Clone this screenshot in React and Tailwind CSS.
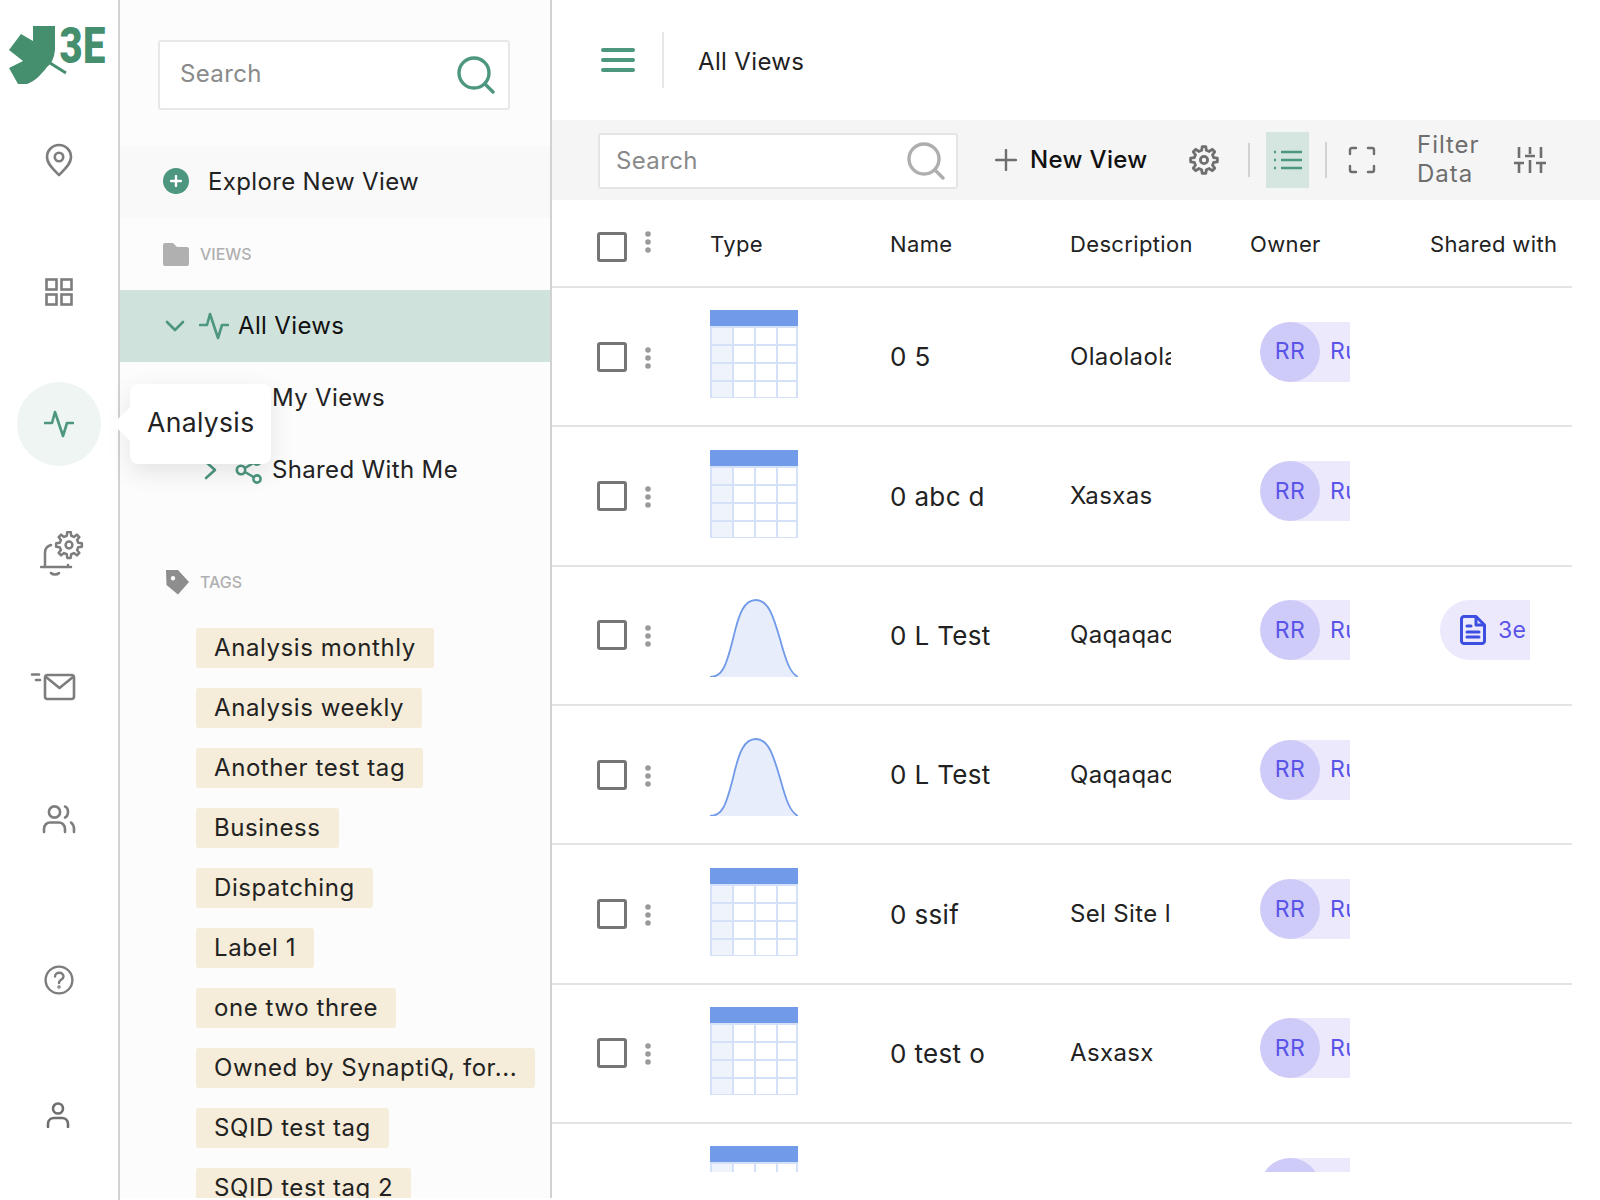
import React from "react";

function gearPath(cx, cy, ro, ri, n) {
  const step = (Math.PI * 2) / n;
  const pts = [];
  for (let i = 0; i < n; i++) {
    const a = i * step - Math.PI / 2;
    const w1 = step * 0.3;
    const w2 = step * 0.17;
    pts.push([cx + ri * Math.cos(a - w1), cy + ri * Math.sin(a - w1)]);
    pts.push([cx + ro * Math.cos(a - w2), cy + ro * Math.sin(a - w2)]);
    pts.push([cx + ro * Math.cos(a + w2), cy + ro * Math.sin(a + w2)]);
    pts.push([cx + ri * Math.cos(a + w1), cy + ri * Math.sin(a + w1)]);
  }
  return "M" + pts.map((p) => p[0].toFixed(2) + " " + p[1].toFixed(2)).join(" L") + " Z";
}

const Pin = () => (
  <svg width="30" height="34" viewBox="0 0 30 34" fill="none" stroke="#7d7d7d" strokeWidth="2.6">
    <path d="M15 32 C10 27 3 21 3 14 A12 12 0 0 1 27 14 C27 21 20 27 15 32 Z" strokeLinejoin="round" />
    <circle cx="15" cy="14" r="4.2" />
  </svg>
);
const GridIcon = () => (
  <svg width="28" height="28" viewBox="0 0 28 28" fill="none" stroke="#7d7d7d" strokeWidth="2.6">
    <rect x="1.5" y="1.5" width="10" height="10" />
    <rect x="16.5" y="1.5" width="10" height="10" />
    <rect x="1.5" y="16.5" width="10" height="10" />
    <rect x="16.5" y="16.5" width="10" height="10" />
  </svg>
);
const Activity = ({ w = 30, h = 28, sw = 2.6 }) => (
  <svg width={w} height={h} viewBox="0 0 30 28" fill="none" stroke="#4d9680" strokeWidth={sw} strokeLinecap="round" strokeLinejoin="round">
    <path d="M1 13 H8 L11 2 L19 26 L23 13 H29" />
  </svg>
);
const BellGear = () => (
  <svg width="44" height="46" viewBox="0 0 44 46" fill="none" stroke="#7d7d7d" strokeWidth="2.5" strokeLinecap="round" strokeLinejoin="round">
    <path d="M1 36 H31 M5 36 V22 C5 18 7 15 11 14 M28 36 L28 34 M11 42 C13 44 17 44 19 42" />
    <path d={gearPath(29, 14, 13, 9.5, 8)} />
    <circle cx="29" cy="14" r="3.4" />
  </svg>
);
const Mail = () => (
  <svg width="46" height="28" viewBox="0 0 46 28" fill="none" stroke="#7d7d7d" strokeWidth="2.6" strokeLinecap="round" strokeLinejoin="round">
    <rect x="15" y="2" width="29" height="24" rx="2.5" />
    <path d="M16 4 L29.5 15 L43 4" />
    <path d="M2 1.5 H9 M6 7 H10" />
  </svg>
);
const Users = () => (
  <svg width="34" height="30" viewBox="0 0 34 30" fill="none" stroke="#7d7d7d" strokeWidth="2.6" strokeLinecap="round">
    <circle cx="12.5" cy="8" r="5.6" />
    <path d="M23 2.5 C27 4 27 12 23 13.5" />
    <path d="M2 28 V25 C2 21 5 18.5 8 18.5 H17 C20 18.5 23 21 23 25 V28" />
    <path d="M29 18.5 C31 20 32 22 32 25 V28" />
  </svg>
);
const Help = () => (
  <svg width="30" height="30" viewBox="0 0 30 30" fill="none" stroke="#7d7d7d" strokeWidth="2.4" strokeLinecap="round">
    <circle cx="15" cy="15" r="13.4" />
    <path d="M11 11.5 C11 6.5 19.5 6.5 19.5 11.5 C19.5 14.5 15 14.5 15 18" />
    <circle cx="15" cy="22" r="0.6" fill="#7d7d7d" />
  </svg>
);
const User = () => (
  <svg width="24" height="26" viewBox="0 0 24 26" fill="none" stroke="#6e6e6e" strokeWidth="2.6" strokeLinecap="round">
    <circle cx="12" cy="6.5" r="5" />
    <path d="M2 25 V22 C2 18 5 16 8 16 H16 C19 16 22 18 22 22 V25" />
  </svg>
);
const Search = ({ c = "#4d9680" }) => (
  <svg width="38" height="38" viewBox="0 0 38 38" fill="none" stroke={c} strokeWidth="3.4" strokeLinecap="round">
    <circle cx="17" cy="17" r="15" />
    <path d="M28 28 L36 36" />
  </svg>
);
const Chevron = ({ down }) => (
  <svg width="20" height="20" viewBox="0 0 20 20" fill="none" stroke="#4d9680" strokeWidth="2.6" strokeLinecap="round" strokeLinejoin="round">
    {down ? <path d="M2 6 L10 14 L18 6" /> : <path d="M6 2 L15 10 L6 18" />}
  </svg>
);
const Share = () => (
  <svg width="28" height="28" viewBox="0 0 28 28" fill="none" stroke="#4d9680" strokeWidth="2.6">
    <circle cx="6" cy="14" r="4.2" />
    <circle cx="22" cy="5" r="3.6" />
    <circle cx="22" cy="23" r="3.6" />
    <path d="M10 12 L18.5 7 M10 16 L18.5 21" />
  </svg>
);
const GreenUser = () => (
  <svg width="28" height="28" viewBox="0 0 28 28" fill="none" stroke="#4d9680" strokeWidth="2.6">
    <circle cx="14" cy="7" r="5" />
    <path d="M3 27 C3 19 8 17 14 17 C20 17 25 19 25 27" />
  </svg>
);
const Logo = () => (
  <svg width="118" height="93" viewBox="0 0 118 93">
    <path d="M33 26 H55 V50 C54 58 52 63 47 67 C41 75 35 81 27 84 H18 L9 68 L23 61 L9 50 L21 34 L33 41 Z" fill="#458f6f" />
    <path d="M50 63 L66 73" stroke="#458f6f" strokeWidth="3" />
    <text x="59.5" y="62.5" textLength="46" lengthAdjust="spacingAndGlyphs" fontFamily="Roboto" fontWeight="900" fontSize="50" fill="#458f6f">3E</text>
  </svg>
);
const TableThumb = () => (
  <svg width="88" height="88" viewBox="0 0 88 88" className="block shrink-0">
    <rect width="88" height="88" fill="#d5e1f9" />
    <rect width="88" height="16" fill="#719ae9" />
    {[17, 35, 53, 71].map((y) => (
      <g key={y}>
        <rect x="2" y={y + 1} width="20" height={y === 71 ? 15 : 16} fill="#eef3fc" />
        <rect x="24" y={y + 1} width="20" height={y === 71 ? 15 : 16} fill="#fff" />
        <rect x="46" y={y + 1} width="20" height={y === 71 ? 15 : 16} fill="#fff" />
        <rect x="68" y={y + 1} width="18" height={y === 71 ? 15 : 16} fill="#fff" />
      </g>
    ))}
  </svg>
);
const curve = "M0 88 C12 88 16 78 23 50 C29 24 34 11 46 11 C58 11 63 26 70 50 C76 72 80 84 88 88";
const BellThumb = () => (
  <svg width="88" height="88" viewBox="0 0 88 88" className="block shrink-0">
    <path d={curve + " Z"} fill="#e7edfb" />
    <path d={curve} fill="none" stroke="#719ae9" strokeWidth="1.8" />
  </svg>
);
const Dots = () => (
  <svg width="8" height="22" viewBox="0 0 8 22" fill="#9a9a9a" className="block">
    <circle cx="4" cy="3" r="2.8" />
    <circle cx="4" cy="11" r="2.8" />
    <circle cx="4" cy="19" r="2.8" />
  </svg>
);
const Check = () => <div className="w-[30px] h-[30px] border-[3px] border-[#757575] rounded-[3px] shrink-0 bg-white" />;

const Doc = () => (
  <svg width="26" height="30" viewBox="0 0 26 30" fill="none" stroke="#3d4fe0" strokeWidth="3" strokeLinecap="round" strokeLinejoin="round">
    <path d="M4 1.5 H16 L24.5 10 V26 A2.5 2.5 0 0 1 22 28.5 H4 A2.5 2.5 0 0 1 1.5 26 V4 A2.5 2.5 0 0 1 4 1.5 Z" />
    <path d="M16 2 V10 H24" />
    <path d="M7 11 H11 M7 17 H19 M7 22 H19" />
  </svg>
);

const OwnerChip = () => (
  <div className="flex items-center w-[90px] h-[60px] bg-[#ece9fd] rounded-l-[30px] overflow-hidden mb-[10px] ml-[10px] shrink-0">
    <div className="w-[60px] h-[60px] rounded-full bg-[#cfcbf9] text-[#5b54e8] text-[23px] flex items-center justify-center shrink-0">RR</div>
    <span className="text-[#5b54e8] text-[23px] ml-[10px] whitespace-nowrap">Rudi</span>
  </div>
);

const rows = [
  ["t", "0 5", "Olaolaola"],
  ["t", "0 abc d", "Xasxas"],
  ["b", "0 L Test", "Qaqaqaca", true],
  ["b", "0 L Test", "Qaqaqaca"],
  ["t", "0 ssif", "Sel Site l"],
  ["t", "0 test o", "Asxasx"],
  ["t", "", ""],
];
const tags = ["Analysis monthly", "Analysis weekly", "Another test tag", "Business", "Dispatching", "Label 1", "one two three", "Owned by SynaptiQ, for...", "SQID test tag", "SQID test tag 2"];

const RailItem = ({ children }) => <div className="h-[132.4px] w-full flex items-center justify-center shrink-0">{children}</div>;

export default function App() {
  return (
    <div className="relative flex w-[1600px] h-[1200px] overflow-hidden bg-white font-['Inter',sans-serif] text-[#222] tracking-[0.022em]">
      {/* rail */}
      <div className="w-[120px] h-full border-r-2 border-[#d2d2d2] flex flex-col shrink-0 bg-white">
        <div className="h-[93px] shrink-0"><Logo /></div>
        <RailItem><div className="mt-[2px]"><Pin /></div></RailItem>
        <RailItem><GridIcon /></RailItem>
        <RailItem>
          <div className="w-[84px] h-[84px] rounded-full bg-[#eef5f2] flex items-center justify-center"><Activity /></div>
        </RailItem>
        <RailItem><div className="ml-[6px] mb-[4px]"><BellGear /></div></RailItem>
        <RailItem><div className="-ml-[12px] mb-[4px]"><Mail /></div></RailItem>
        <RailItem><div className="mb-[4px]"><Users /></div></RailItem>
        <div className="mt-[26px]"><RailItem><Help /></RailItem></div>
        <RailItem><div className="mt-[6px] -ml-[2px]"><User /></div></RailItem>
      </div>

      {/* panel */}
      <div className="w-[432px] h-[1198px] overflow-hidden border-r-2 border-[#d2d2d2] bg-[#fcfcfc] shrink-0 pt-[40px] flex flex-col">
        <div className="mx-[38px] h-[70px] w-[352px] shrink-0 bg-white border-2 border-[#e8e8e8] rounded-[3px] flex items-center justify-between pl-[20px] pr-[13px]">
          <span className="text-[24px] text-[#8a8a8a] -mt-[2px]">Search</span>
          <Search />
        </div>
        <div className="mt-[36px] h-[72px] shrink-0 bg-[#f9f9f9] flex items-center pl-[43px]">
          <div className="w-[26px] h-[26px] rounded-full bg-[#4d9680] text-white flex items-center justify-center -mt-[2px]">
            <svg width="12" height="12" viewBox="0 0 12 12" stroke="#fff" strokeWidth="2.4" strokeLinecap="round"><path d="M6 1 V11 M1 6 H11" /></svg>
          </div>
          <span className="ml-[19px] text-[24px]">Explore New View</span>
        </div>
        <div className="h-[72px] shrink-0 flex items-center pl-[43px]">
          <svg width="26" height="23" viewBox="0 0 26 23" fill="#b0b0b0"><path d="M2 0 H10 L14 4 H24 A2 2 0 0 1 26 6 V21 A2 2 0 0 1 24 23 H2 A2 2 0 0 1 0 21 V2 A2 2 0 0 1 2 0 Z" /></svg>
          <span className="ml-[11px] text-[16px] font-medium text-[#b0b0b0] tracking-normal">VIEWS</span>
        </div>
        <div className="h-[72px] shrink-0 bg-[#cfe2dc] flex items-center pl-[45px]">
          <Chevron down />
          <div className="ml-[14px]"><Activity /></div>
          <span className="ml-[9px] text-[24px] text-[#111]">All Views</span>
        </div>
        <div className="h-[72px] shrink-0 flex items-center pl-[115px]">
          <GreenUser />
          <span className="ml-[9px] text-[24px]">My Views</span>
        </div>
        <div className="h-[72px] shrink-0 flex items-center pl-[80px]">
          <Chevron />
          <div className="ml-[15px]"><Share /></div>
          <span className="ml-[9px] text-[24px]">Shared With Me</span>
        </div>
        <div className="mt-[40px] h-[72px] shrink-0 flex items-center pl-[45px]">
          <svg width="25" height="25" viewBox="0 0 25 25" fill="#8e8e8e"><path d="M1 0 H13 L24 12 L13 24.5 L1.5 15 Z M8 6 A2.2 2.2 0 1 0 8 10.4 A2.2 2.2 0 1 0 8 6 Z" fillRule="evenodd" /></svg>
          <span className="ml-[10px] text-[16px] font-medium text-[#b0b0b0] tracking-normal">TAGS</span>
        </div>
        <div className="mt-[10px] pl-[76px] flex flex-col items-start gap-[20px]">
          {tags.map((t) => (
            <div key={t} className="h-[40px] shrink-0 px-[18px] bg-[#f5ecd9] rounded-[3px] flex items-center text-[24px] tracking-[0.024em] whitespace-nowrap">{t}</div>
          ))}
        </div>
      </div>

      {/* main */}
      <div className="flex-1 min-w-0 flex flex-col">
        <div className="h-[120px] shrink-0 flex items-center pl-[49px]">
          <svg width="34" height="26" viewBox="0 0 34 26" stroke="#4d9680" strokeWidth="4" strokeLinecap="round"><path d="M2 3 H32 M2 13 H32 M2 23 H32" /></svg>
          <div className="ml-[27px] w-[2px] h-[56px] bg-[#e7e7e7]" />
          <span className="ml-[34px] text-[24px] mt-[4px]">All Views</span>
        </div>
        <div className="h-[80px] shrink-0 bg-[#f5f5f5] flex items-center pl-[46px]">
          <div className="mt-[2px] w-[360px] h-[56px] bg-white border-2 border-[#e5e5e5] rounded-[3px] flex items-center justify-between pl-[16px] pr-[11px]">
            <span className="text-[24px] text-[#8a8a8a]">Search</span>
            <Search c="#aeaeae" />
          </div>
          <svg className="ml-[37px]" width="22" height="22" viewBox="0 0 22 22" stroke="#6e6e6e" strokeWidth="2.4" strokeLinecap="round"><path d="M11 1 V21 M1 11 H21" /></svg>
          <span className="ml-[13px] text-[24px] font-medium text-[#111] w-[165px]">New View</span>
          <div className="-ml-[6px]">
            <svg width="30" height="30" viewBox="0 0 30 30" fill="none" stroke="#6e6e6e" strokeWidth="2.8" strokeLinejoin="round"><path d={gearPath(15, 15, 13.5, 10, 8)} /><circle cx="15" cy="15" r="3.6" /></svg>
          </div>
          <div className="ml-[29px] w-[2px] h-[34px] bg-[#d2d2d2]" />
          <div className="ml-[16px] w-[43px] h-[56px] bg-[#d5e5e0] flex items-center justify-center">
            <svg width="28" height="22" viewBox="0 0 28 22" stroke="#4d9680" strokeWidth="2.6"><path d="M7 3 H28 M7 11 H28 M7 19 H28 M0 3 H2 M0 11 H2 M0 19 H2" /></svg>
          </div>
          <div className="ml-[16px] w-[2px] h-[36px] bg-[#d2d2d2]" />
          <svg className="ml-[21px]" width="28" height="28" viewBox="0 0 28 28" fill="none" stroke="#6e6e6e" strokeWidth="2.4" strokeLinecap="round" strokeLinejoin="round"><path d="M8 2 H4 Q2 2 2 4 V8 M20 2 H24 Q26 2 26 4 V8 M2 20 V24 Q2 26 4 26 H8 M26 20 V24 Q26 26 24 26 H20" /></svg>
          <div className="ml-[41px] -mt-[2px] text-[24px] leading-[29px] text-[#6e6e6e] w-[97px] tracking-[0.04em]">Filter<br />Data</div>
          <svg width="32" height="28" viewBox="0 0 32 28" fill="none" stroke="#6e6e6e" strokeWidth="2.6"><path d="M5 1 V12 M5 18 V27 M16 1 V8 M16 14 V27 M27 1 V12 M27 18 V27 M0 17 H10 M11 10 H21 M22 17 H32" /></svg>
        </div>

        <div className="h-[88px] shrink-0 w-[1020px] border-b-2 border-[#e3e3e3] flex items-center pl-[45px] pt-[3px] text-[22px]">
          <div className="w-[113px] shrink-0 flex items-start">
            <div className="mt-[4px]"><Check /></div>
            <div className="ml-[17px] mt-[3px]"><Dots /></div>
          </div>
          <div className="w-[180px] shrink-0">Type</div>
          <div className="w-[180px] shrink-0">Name</div>
          <div className="w-[180px] shrink-0">Description</div>
          <div className="w-[180px] shrink-0">Owner</div>
          <div className="shrink-0">Shared with</div>
        </div>

        <div className="h-[884px] w-[1020px] overflow-hidden shrink-0">
          {rows.map((r, i) => (
            <div key={i} className="h-[139.35px] border-b-2 border-[#e3e3e3] flex items-center pl-[45px]">
              <div className="w-[113px] shrink-0 flex items-center">
                {r[1] && <Check />}
                {r[1] && <div className="ml-[17px] mt-[2px]"><Dots /></div>}
              </div>
              <div className="w-[180px] shrink-0 mb-[5px]">{r[0] === "t" ? <TableThumb /> : <BellThumb />}</div>
              <div className="w-[180px] shrink-0 text-[26px]">{r[1]}</div>
              <div className="w-[180px] shrink-0 text-[24px] overflow-hidden">
                <div className="w-[101px] overflow-hidden whitespace-nowrap">{r[2]}</div>
              </div>
              <div className="w-[180px] shrink-0"><OwnerChip /></div>
              {r[3] && (
                <div className="flex items-center w-[90px] h-[60px] bg-[#ece9fd] rounded-l-[30px] overflow-hidden mb-[10px] ml-[10px] shrink-0 pl-[20px]">
                  <Doc />
                  <span className="ml-[12px] text-[#5b54e8] text-[23px] whitespace-nowrap">3e</span>
                </div>
              )}
            </div>
          ))}
        </div>
      </div>

      {/* tooltip */}
      <div className="absolute left-[130px] top-[384px] w-[141px] h-[80px] bg-white rounded-[8px] shadow-[0_8px_24px_rgba(0,0,0,0.1)] flex items-center pl-[17px] text-[26.5px]">
        <div className="absolute -left-[12px] top-[28px] w-[24px] h-[24px] rotate-45 bg-white" />
        <span className="relative -mt-[2px]">Analysis</span>
      </div>
    </div>
  );
}
